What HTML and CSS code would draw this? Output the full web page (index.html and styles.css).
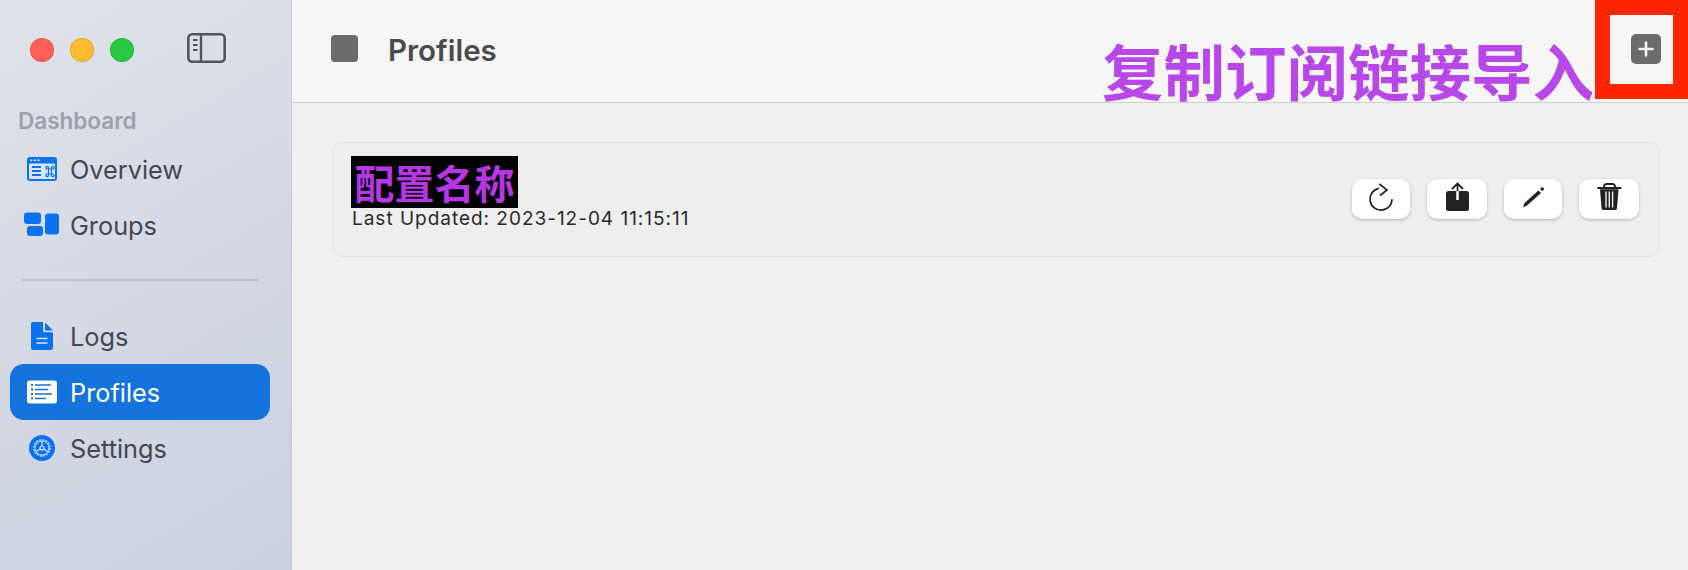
FILE: index.html
```html
<!DOCTYPE html>
<html lang="zh-CN">
<head>
<meta charset="UTF-8" />
<meta name="viewport" content="width=device-width, initial-scale=1" />
<title>Profiles</title>
<link rel="stylesheet" href="styles.css">
</head>
<body>
  <aside class="sidebar">
    <div class="titlebar">
      <div class="lights">
        <span class="light light-red"></span>
        <span class="light light-yellow"></span>
        <span class="light light-green"></span>
      </div>
      <svg class="toggle-icon" viewBox="0 0 39 30" aria-hidden="true">
        <rect x="1.300" y="1.300" width="36.400" height="27.400" rx="4" fill="none" stroke="#50545f" stroke-width="2.600"/>
        <line x1="14" y1="2" x2="14" y2="28" stroke="#50545f" stroke-width="2.400"/>
        <path d="M6 7h4.500M6 12h4.500M6 17h4.500" stroke="#50545f" stroke-width="2"/>
      </svg>
    </div>
    <div class="section-label">Dashboard</div>
    <nav class="nav">
      <a class="nav-item">
        <svg class="nav-icon" viewBox="0 0 32 28" aria-hidden="true">
          <rect x="1" y="2" width="30" height="24" rx="3" fill="#0a72f0"/>
          <rect x="3" y="8.500" width="26" height="15.500" rx="1" fill="#d8e6f7"/>
          <path d="M4.500 5.200h1.800M8 5.200h1.800M11.500 5.200h1.800" stroke="#fff" stroke-width="1.500"/>
          <path d="M6 12h9M6 16h9M6 20h9" stroke="#0a72f0" stroke-width="1.800"/>
          <path d="M22.500 14h3v5h-3zM22.500 14h-1.300a1.300 1.300 0 1 1 1.300-1.300zM25.500 14v-1.300a1.300 1.300 0 1 1 1.300 1.300zM25.500 19h1.300a1.300 1.300 0 1 1-1.300 1.300zM22.500 19v1.300a1.300 1.300 0 1 1-1.300-1.300z" fill="none" stroke="#0a72f0" stroke-width="1.200"/>
        </svg>
        <span>Overview</span>
      </a>
      <a class="nav-item">
        <svg class="nav-icon" viewBox="0 0 32 28" aria-hidden="true">
          <rect x="-2" y="1.500" width="17" height="11.500" rx="3" fill="#0a72f0"/>
          <rect x="1" y="15" width="16" height="10" rx="3" fill="#0a72f0"/>
          <rect x="19" y="2.500" width="14" height="21" rx="3" fill="#0a72f0"/>
        </svg>
        <span>Groups</span>
      </a>
      <div class="nav-divider"></div>
      <a class="nav-item">
        <svg class="nav-icon" viewBox="0 0 32 28" aria-hidden="true">
          <path d="M7 0h10v8c0 1.500.8 2.300 2.300 2.300H27V26a2 2 0 0 1-2 2H7a2 2 0 0 1-2-2V2a2 2 0 0 1 2-2z" fill="#0a72f0"/>
          <path d="M19 0.500l8 8h-7c-.7 0-1-.3-1-1z" fill="#0a72f0"/>
          <path d="M10.500 16.500h11M10.500 21h11" stroke="#d8e6f7" stroke-width="1.600"/>
        </svg>
        <span>Logs</span>
      </a>
      <a class="nav-item nav-item-active">
        <svg class="nav-icon" viewBox="0 0 32 28" aria-hidden="true">
          <rect x="1" y="2.500" width="30" height="23" rx="3" fill="#fff"/>
          <path d="M5 7h2M5 11.500h2M5 16h2M5 20.500h2" stroke="#1573dd" stroke-width="2"/>
          <path d="M9 7h16M9 11.500h13M9 16h17M9 20.500h11" stroke="#1573dd" stroke-width="1.500"/>
        </svg>
        <span>Profiles</span>
      </a>
      <a class="nav-item">
        <svg class="nav-icon" viewBox="0 0 32 28" aria-hidden="true">
          <circle cx="16" cy="14" r="13" fill="#0a72f0"/>
          <circle cx="16" cy="14" r="8.200" fill="none" stroke="#d8e6f7" stroke-width="1.200" stroke-dasharray="2 1.220"/>
          <circle cx="16" cy="14" r="7" fill="none" stroke="#d8e6f7" stroke-width="1"/>
          <circle cx="16" cy="14" r="2" fill="none" stroke="#d8e6f7" stroke-width="1.100"/>
          <path d="M16 7v5M10 17.500l4.300-2.500M22 17.500L17.700 15" stroke="#d8e6f7" stroke-width="1.100"/>
        </svg>
        <span>Settings</span>
      </a>
    </nav>
  </aside>

  <main class="main">
    <header class="topbar">
      <div class="topbar-left">
        <span class="square-icon"></span>
        <h1 class="page-title">Profiles</h1>
      </div>
      <button class="add-btn" aria-label="Add">
        <svg viewBox="0 0 30 30" aria-hidden="true">
          <path d="M15 8.500v13M8.500 15h13" stroke="#f4f4f4" stroke-width="2.600" stroke-linecap="round"/>
        </svg>
      </button>
    </header>

    <section class="content">
      <div class="card">
        <div class="card-info">
          <div class="card-name">配置名称</div>
          <div class="card-date">Last Updated: 2023-12-04 11:15:11</div>
        </div>
        <div class="card-actions">
          <button class="action-btn action-narrow" aria-label="Refresh">
            <svg viewBox="0 0 28 32" aria-hidden="true">
              <path d="M11.700 5.400A11 11 0 1 0 25 16.300" fill="none" stroke="#222" stroke-width="1.700"/>
              <path d="M12.300 .8L20 7l-7 5.500" fill="none" stroke="#222" stroke-width="1.700"/>
            </svg>
          </button>
          <button class="action-btn" aria-label="Share">
            <svg viewBox="0 0 28 32" aria-hidden="true">
              <rect x="3" y="8" width="23" height="20" rx="2.500" fill="#222"/>
              <path d="M14.500 8v9" stroke="#fff" stroke-width="2.500"/>
              <path d="M14.500 8V1M9 6l5.500-5.500L20 6" fill="none" stroke="#222" stroke-width="1.800"/>
            </svg>
          </button>
          <button class="action-btn action-narrow" aria-label="Edit">
            <svg viewBox="0 0 28 32" aria-hidden="true">
              <path d="M4 24.500l1.500-4.500L19.500 7.500 22 10 8 22.500z" fill="#222"/>
              <circle cx="23.200" cy="6" r="1.800" fill="#222"/>
            </svg>
          </button>
          <button class="action-btn" aria-label="Delete">
            <svg viewBox="0 0 28 32" aria-hidden="true">
              <path d="M2.300 5h24" stroke="#222" stroke-width="2"/>
              <path d="M9 5V3.500A2.500 2.500 0 0 1 11.500 1h6A2.500 2.500 0 0 1 20 3.500V5" fill="none" stroke="#222" stroke-width="1.800"/>
              <path d="M5 6.300h18.500L22 25a2 2 0 0 1-2 2H8.500a2 2 0 0 1-2-2z" fill="#222"/>
              <path d="M11 8.500v16M14.300 8.500v16M17.600 8.500v16" stroke="#eee" stroke-width="1.400"/>
            </svg>
          </button>
        </div>
      </div>
    </section>
  </main>

  <!-- annotations drawn on top of the screenshot -->
  <div class="mark-box"></div>
  <div class="mark-text">复制订阅链接导入</div>
</body>
</html>
```

FILE: styles.css
```css
html, body {
  height: 100%;
  margin: 0;
}
body {
  display: flex;
  position: relative;
  overflow: hidden;
  font-family: Inter, "Noto Sans", "Noto Sans CJK SC", sans-serif;
  background: #f0f0f0;
}
.sidebar {
  width: 292px;
  flex-shrink: 0;
  box-sizing: border-box;
  border-right: 1px solid #c9ccd3;
  background: linear-gradient(150deg, #e0e3e9 0%, #d6dae5 45%, #cbd0e0 100%);
  padding: 0 21px 0 10px;
}
.titlebar {
  height: 100px;
  display: flex;
  align-items: center;
  gap: 53px;
  padding-left: 20px;
}
.lights {
  display: flex;
  gap: 16px;
}
.light {
  width: 24px;
  height: 24px;
  box-sizing: border-box;
  border-radius: 50%;
  border: 1px solid rgba(0, 0, 0, 0.1);
}
.light-red { background: #ff5f57; }
.light-yellow { background: #febc2e; }
.light-green { background: #28c840; }
.toggle-icon {
  width: 39px;
  height: 30px;
  margin-top: -4px;
}
.section-label {
  margin-left: 8px;
  height: 41px;
  line-height: 41px;
  font-size: 22.500px;
  font-weight: 600;
  color: #9da1ab;
}
.nav-item {
  height: 56px;
  box-sizing: border-box;
  padding: 0 0 0 16px;
  display: flex;
  align-items: center;
  gap: 12px;
  border-radius: 14px;
  font-size: 25.300px;
  color: #444852;
}
.nav-item-active {
  background: #1573dd;
  color: #fff;
}
.nav-icon {
  width: 32px;
  height: 28px;
  flex-shrink: 0;
  overflow: visible;
}
.nav-divider {
  height: 2px;
  margin: 26px 12px 27px 12px;
  background: #bcc1cd;
}
.main {
  flex: 1;
  min-width: 0;
  display: flex;
  flex-direction: column;
}
.topbar {
  height: 103px;
  flex-shrink: 0;
  box-sizing: border-box;
  border-bottom: 1px solid #cfcfcf;
  background: #f6f6f6;
  display: flex;
  align-items: center;
  justify-content: space-between;
  padding: 0 27px 5px 39px;
}
.topbar-left {
  display: flex;
  align-items: center;
  gap: 30px;
}
.square-icon {
  width: 27px;
  height: 27px;
  border-radius: 4px;
  background: #6b6b6b;
}
.page-title {
  margin: 2px 0 0;
  font-size: 29.500px;
  font-weight: 600;
  color: #4b4b4b;
}
.add-btn {
  width: 30px;
  height: 30px;
  padding: 0;
  border: none;
  border-radius: 5px;
  background: #6b6b6b;
  position: relative;
  z-index: 3;
}
.add-btn svg {
  display: block;
  width: 30px;
  height: 30px;
}
.content {
  padding: 39px 28px 0 40px;
}
.card {
  height: 115px;
  box-sizing: border-box;
  border: 1px solid #e3e3e3;
  border-radius: 10px;
  background: #eeeeee;
  display: flex;
  align-items: flex-start;
  justify-content: space-between;
  padding: 13px 20px 0 18px;
}
.card-name {
  width: 167px;
  height: 52px;
  line-height: 52px;
  text-align: center;
  background: #000;
  color: #b636e6;
  font-family: "Noto Sans CJK SC", sans-serif;
  font-size: 40px;
  font-weight: 700;
  white-space: nowrap;
}
.card-date {
  margin: -1px 0 0 1px;
  font-size: 19px;
  line-height: 24px;
  letter-spacing: 0.98px;
  color: #2a2a2a;
}
.card-actions {
  display: flex;
  gap: 17px;
  margin-top: 23px;
}
.action-btn {
  width: 60px;
  height: 40px;
  padding: 0;
  border: none;
  border-radius: 10px;
  background: #fff;
  box-shadow: 0 1px 3px rgba(0, 0, 0, 0.25);
  display: flex;
  align-items: center;
  justify-content: center;
}
.action-narrow {
  width: 58px;
}
.action-btn svg {
  width: 28px;
  height: 32px;
  overflow: visible;
}
.mark-box {
  position: absolute;
  top: 0;
  right: 0;
  width: 93px;
  height: 99px;
  box-sizing: border-box;
  border: 15px solid #ff2600;
  z-index: 2;
}
.mark-text {
  position: absolute;
  left: 1102px;
  top: 30px;
  font-family: "Noto Sans CJK SC", sans-serif;
  font-size: 61.500px;
  line-height: 80px;
  font-weight: 700;
  color: #b847ea;
  white-space: nowrap;
  z-index: 2;
}
```
